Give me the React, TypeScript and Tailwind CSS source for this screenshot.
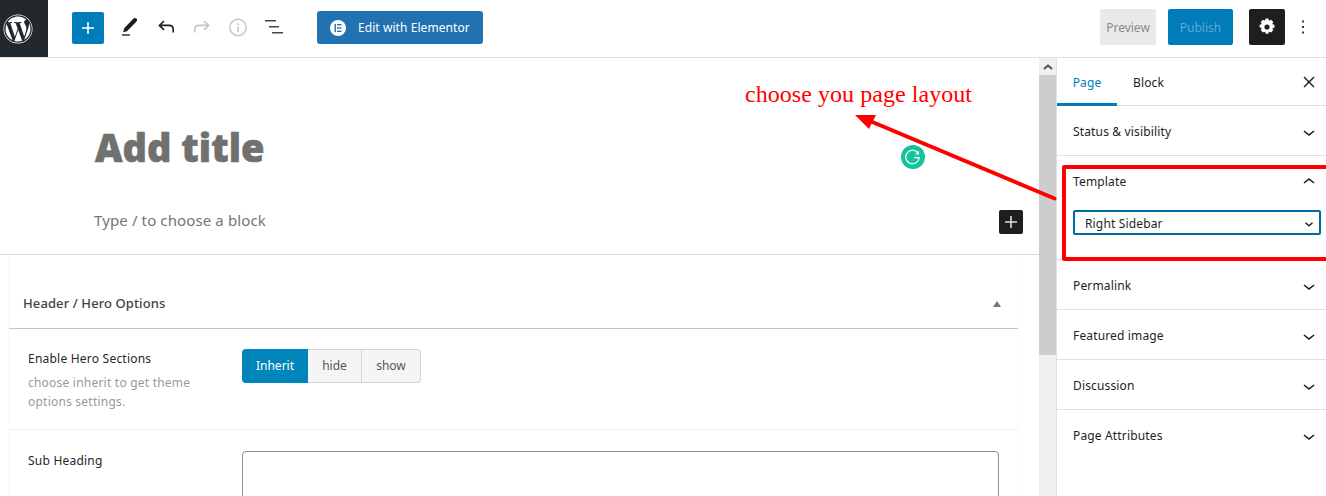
import { FaWordpress } from "react-icons/fa";

const ui = { fontFamily: '"Noto Sans", "Open Sans", sans-serif' };

function Chevron({ up = false }: { up?: boolean }) {
    return (
        <svg width="24" height="24" viewBox="0 0 24 24" fill="#1e1e1e">
            {up ? (
                <path d="M6.5 12.4L12 8l5.500 4.400-.9 1.200L12 10l-4.500 3.600-1-1.200z" />
            ) : (
                <path d="M17.500 11.600L12 16l-5.500-4.400.9-1.200L12 14l4.600-3.600 1 1.200z" />
            )}
        </svg>
    );
}

function PanelRow({ title, last = false }: { title: string; last?: boolean }) {
    return (
        <div className={`h-[50px] flex items-center justify-between pl-4 pr-[5px] text-[12px] tracking-[0.15px] text-[#1e1e1e] ${last ? "pt-[1px]" : "pt-[2px] border-b border-[#e0e0e0]"}`}>
            <span>{title}</span>
            <Chevron />
        </div>
    );
}

function Toolbar() {
    return (
        <header className="h-[58px] border-b border-[#e0e0e0] bg-white flex items-center shrink-0">
            <div className="w-[48px] h-[57px] bg-[#23282d] flex items-center pl-[3px] text-white">
                <FaWordpress size={30} />
            </div>
            <div className="w-[32px] h-[32px] ml-[24px] mb-[2px] bg-[#007cba] rounded-[2px] flex items-center justify-center">
                <svg width="24" height="24" viewBox="0 0 24 24" fill="#fff">
                    <path d="M18 11.200h-5.200V6h-1.600v5.200H6v1.600h5.200V18h1.600v-5.200H18z" />
                </svg>
            </div>
            {/* tools, each box is 32x32 */}
            <div className="flex items-center ml-[10px] mb-[1px] gap-[4px]">
                <svg width="32" height="32" viewBox="0 0 32 32">
                    <path d="M19.500 6.600c1-.9 2-.9 2.900 0 .9.9 1 2 .1 3L13 19.200l-3.800 1 1-3.900z" fill="#1e1e1e" />
                    <rect x="8" y="22.200" width="8" height="1.600" fill="#444" />
                </svg>
                <svg width="32" height="32" viewBox="0 0 32 32" fill="none" stroke="#1e1e1e" strokeWidth="1.600">
                    <path d="M14 9l-4.600 4.400L14 17.800M9.500 13.400H19c2.700 0 4.200 1.700 4.200 4.200v3" />
                </svg>
                <svg width="32" height="32" viewBox="0 0 32 32" fill="none" stroke="#c4c4c4" strokeWidth="1.600">
                    <path d="M18 9l4.600 4.400L18 17.800M22.500 13.400H13c-2.700 0-4.200 1.700-4.200 4.200v3" />
                </svg>
                <svg width="32" height="32" viewBox="0 0 32 32">
                    <circle cx="16" cy="15.500" r="8.200" fill="none" stroke="#c4c4c4" strokeWidth="1.500" />
                    <rect x="15.200" y="14.500" width="1.600" height="5.400" fill="#c4c4c4" />
                    <rect x="15.200" y="11.100" width="1.600" height="1.800" fill="#c4c4c4" />
                </svg>
                <svg width="32" height="32" viewBox="0 0 32 32" fill="#444">
                    <rect x="7" y="8" width="11" height="1.500" />
                    <rect x="11" y="14" width="10" height="1.500" />
                    <rect x="14" y="20" width="11" height="1.500" />
                </svg>
            </div>
            <button className="h-[33px] w-[166px] ml-[27px] mb-[2px] bg-[#2271b1] rounded-[3px] flex items-center text-white text-[12px] tracking-[0.07px]">
                <span className="w-[16px] h-[16px] ml-[13px] mr-[12px] rounded-full bg-white flex items-center justify-center">
                    <svg width="10" height="10" viewBox="0 0 10 10" fill="#2271b1">
                        <rect x="1.500" y="1" width="1.400" height="8" />
                        <rect x="4" y="1" width="4.500" height="1.400" />
                        <rect x="4" y="4.300" width="4.500" height="1.400" />
                        <rect x="4" y="7.600" width="4.500" height="1.400" />
                    </svg>
                </span>
                <span className="pt-[1px]">Edit with Elementor</span>
            </button>
            <div className="ml-auto flex items-center mb-[3px]">
                <button className="w-[56px] h-[36px] pt-[2px] bg-[#e9e9e9] rounded-[2px] text-[12px] text-[#8a8a8a]">Preview</button>
                <button className="w-[65px] h-[36px] pt-[2px] ml-[12px] bg-[#007cba] rounded-[2px] text-[12px] text-[#5fa9d3]">Publish</button>
                <button className="w-[36px] h-[36px] ml-[16px] bg-[#1e1e1e] rounded-[2px] flex items-center justify-center">
                    <svg width="24" height="24" viewBox="0 0 24 24" fill="#fff">
                        <path
                            fillRule="evenodd"
                            d="M19.400 13.200l-1.600-.4c-.1.3-.2.6-.4.9l.9 1.400-2.200 2.500-1.400-.9c-.3.2-.6.3-.9.4l-.4 1.600h-2.800l-.4-1.600c-.3-.1-.6-.2-.9-.4l-1.400.9-2.200-2.500.9-1.400c-.2-.3-.3-.6-.4-.9l-1.600-.4v-2.600l1.600-.4c.1-.3.2-.6.4-.9l-.9-1.400 2.200-2.400 1.400.9c.3-.2.6-.3.9-.4l.4-1.600h2.800l.4 1.600c.3.1.6.2.9.4l1.400-.9 2.200 2.400-.9 1.400c.2.3.3.6.4.9l1.600.4v2.600zM12 14.600a2.600 2.600 0 100-5.200 2.600 2.600 0 000 5.200z"
                        />
                    </svg>
                </button>
                <svg width="24" height="24" viewBox="0 0 24 24" fill="#1e1e1e" className="ml-[6px] mr-[11px]">
                    <rect x="11.200" y="5.500" width="1.700" height="2" />
                    <rect x="11.200" y="11" width="1.700" height="2" />
                    <rect x="11.200" y="16.500" width="1.700" height="2" />
                </svg>
            </div>
        </header>
    );
}

function Editor() {
    return (
        <main className="w-[1039px] shrink-0 h-full overflow-hidden bg-white">
            <div className="h-[197px] border-b border-[#dcdcdc] pl-[95px] relative">
                <h1 className="pt-[64px] text-[38px] leading-[50px] font-black text-[#707070] [-webkit-text-stroke:0.6px_#707070]">Add title</h1>
                <p className="mt-[36px] -ml-[1px] text-[15px] tracking-[0.12px] leading-[24px] text-[#757575]">Type / to choose a block</p>
                <div className="absolute right-[16px] top-[152px] w-[24px] h-[24px] bg-[#1e1e1e] rounded-[2px] flex items-center justify-center">
                    <svg width="24" height="24" viewBox="0 0 24 24" fill="#ddd">
                        <path d="M18 11.200h-5.200V6h-1.600v5.200H6v1.600h5.200V18h1.600v-5.200H18z" />
                    </svg>
                </div>
            </div>
            {/* meta box */}
            <section className="ml-[8px] mr-[20px] h-full border-x border-[#fafafa] text-[#23282d]">
                <div className="h-[74px] border-b border-[#c3c4c7] flex items-center justify-between pl-[14px] pr-[17px] pt-[24px]">
                    <span className="text-[13px] font-medium tracking-[0.1px] text-[#3c434a]">Header / Hero Options</span>
                    <span className="w-0 h-0 border-x-[4px] border-x-transparent border-b-[6px] border-b-[#72777c]" />
                </div>
                <div className="h-[101px] border-b border-[#eeeeee] flex pl-[19px] pt-[21px]">
                    <div className="w-[214px] text-[12px] tracking-[0.22px]">
                        <div className="leading-[18px] text-[#23282d]">Enable Hero Sections</div>
                        <div className="mt-[5px] leading-[19px] text-[#9a9a9a] w-[180px]">
                            choose inherit to get theme options settings.
                        </div>
                    </div>
                    <div className="flex h-[34px] -mt-[1px] text-[12px]">
                        <span className="w-[66px] bg-[#0085ba] rounded-l-[4px] text-white flex items-center justify-center">Inherit</span>
                        <span className="w-[54px] bg-[#f5f5f5] border-y border-r border-[#d5d5d5] text-[#555] flex items-center justify-center">hide</span>
                        <span className="w-[59px] bg-[#f5f5f5] border-y border-r border-[#d5d5d5] rounded-r-[4px] text-[#555] flex items-center justify-center">show</span>
                    </div>
                </div>
                <div className="flex pl-[19px] pt-[21px]">
                    <div className="w-[214px] pt-[1px] text-[12px] tracking-[0.22px] leading-[18px]">Sub Heading</div>
                    <div className="w-[757px] h-[80px] border border-[#8c8f94] rounded-[4px] bg-white" />
                </div>
            </section>
        </main>
    );
}

function Scrollbar() {
    return (
        <div className="w-[18px] shrink-0 bg-[#f0f0f0] border-r border-[#e0e0e0] flex flex-col h-full">
            <div className="h-[17px] flex items-center justify-center">
                <svg width="10" height="6" viewBox="0 0 10 6" fill="none" stroke="#505050" strokeWidth="2">
                    <path d="M1 5l4-3.500L9 5" />
                </svg>
            </div>
            <div className="h-[280px] bg-[#cdcdcd]" />
        </div>
    );
}

function Sidebar() {
    return (
        <aside className="flex-1 h-full bg-white overflow-hidden">
            <div className="h-[48px] border-b border-[#e0e0e0] flex items-center text-[12px] tracking-[0.15px] text-[#1e1e1e] relative">
                <div className="w-[60px] h-[47px] flex items-center justify-center text-[#007cba] border-b-[3px] border-[#007cba] mt-[1px] pt-[4px]">Page</div>
                <div className="ml-[16px] pt-[3px]">Block</div>
                <svg width="24" height="24" viewBox="0 0 24 24" fill="#1e1e1e" className="absolute right-[5px] top-[12px]">
                    <path d="M13 12l4.500-4.500-1-1L12 11 7.500 6.500l-1 1L11 12l-4.500 4.500 1 1L12 13l4.500 4.500 1-1z" />
                </svg>
            </div>
            <PanelRow title="Status & visibility" />
            <div className="h-[104px] border-b border-[#e0e0e0] pl-4 pr-[5px] text-[12px] tracking-[0.15px] text-[#1e1e1e]">
                <div className="h-[50px] pt-[1px] flex items-center justify-between">
                    <span>Template</span>
                    <Chevron up />
                </div>
                <div className="h-[25px] w-[248px] mt-[4px] pt-[2px] border-2 border-[#006ba1] rounded-[2px] flex items-center justify-between pl-[10px] pr-[3px]">
                    <span>Right Sidebar</span>
                    <svg width="14" height="14" viewBox="0 0 24 24" fill="none" stroke="#1e1e1e" strokeWidth="2.400">
                        <path d="M6 10l6 5 6-5" />
                    </svg>
                </div>
            </div>
            <PanelRow title="Permalink" />
            <PanelRow title="Featured image" />
            <PanelRow title="Discussion" />
            <PanelRow title="Page Attributes" last />
        </aside>
    );
}

function Annotations() {
    return (
        <>
            <div className="absolute left-[1062px] top-[165px] w-[270px] h-[96px] border-[4px] border-[#ff0000] rounded-[2px]" />
            <div
                className="absolute left-[745px] top-[78px] text-[24px] leading-[32px] tracking-[0.05px] text-[#ff0000] whitespace-nowrap"
                style={{ fontFamily: '"Liberation Serif", serif' }}
            >
                choose you page layout
            </div>
            <svg className="absolute left-[840px] top-[100px]" width="225" height="110" viewBox="0 0 225 110">
                <path d="M214.500 98.500L30 21" stroke="#ff0000" strokeWidth="4" strokeLinecap="round" />
                <path d="M15 15L36 15L29 29Z" fill="#ff0000" />
            </svg>
            <div className="absolute left-[901px] top-[145px] w-[24px] h-[24px] rounded-full bg-[#15c39a] flex items-center justify-center">
                <svg width="18" height="18" viewBox="0 0 16 16" fill="none" stroke="#fff" strokeWidth="1.100">
                    <path d="M12.500 4.500A6 6 0 108 14a6 6 0 005.500-5.500H9" />
                    <path d="M12.700 2.800v2.400h-2.400" />
                </svg>
            </div>
        </>
    );
}

export default function App() {
    return (
        <div className="relative w-[1326px] h-[496px] overflow-hidden bg-white flex flex-col" style={ui}>
            <Toolbar />
            <div className="flex flex-1 min-h-0">
                <Editor />
                <Scrollbar />
                <Sidebar />
            </div>
            <Annotations />
        </div>
    );
}
